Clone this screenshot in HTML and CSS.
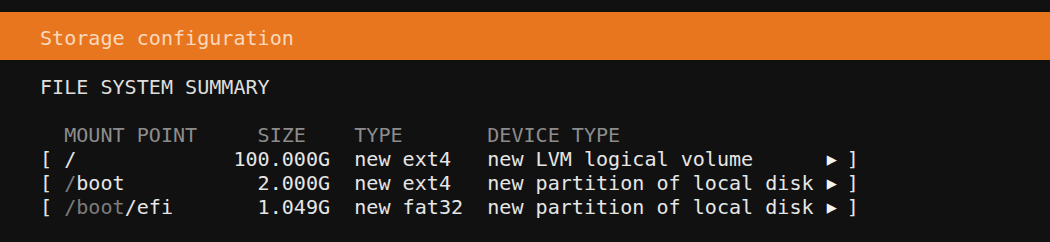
FILE: index.html
```html
<!DOCTYPE html>
<html lang="en">
<head>
<meta charset="utf-8">
<title>Storage configuration</title>
<link rel="stylesheet" href="styles.css">
</head>
<body>
<div class="screen">
  <header class="titlebar"><span class="title">Storage configuration</span></header>
  <main class="content">
    <div class="section">FILE SYSTEM SUMMARY</div>
    <div class="fs-table">
      <span class="cell"></span>
      <span class="cell head">MOUNT POINT</span>
      <span class="cell head size-head">SIZE</span>
      <span class="cell head type">TYPE</span>
      <span class="cell head">DEVICE TYPE</span>
      <span class="cell"></span>
      <span class="cell"></span>

      <span class="cell">[</span>
      <span class="cell">/</span>
      <span class="cell size">100.000G</span>
      <span class="cell type">new ext4</span>
      <span class="cell">new LVM logical volume</span>
      <span class="cell arrow">▶</span>
      <span class="cell close">]</span>

      <span class="cell">[</span>
      <span class="cell"><span class="dim">/</span>boot</span>
      <span class="cell size">2.000G</span>
      <span class="cell type">new ext4</span>
      <span class="cell">new partition of local disk</span>
      <span class="cell arrow">▶</span>
      <span class="cell close">]</span>

      <span class="cell">[</span>
      <span class="cell"><span class="dim">/boot</span>/efi</span>
      <span class="cell size">1.049G</span>
      <span class="cell type">new fat32</span>
      <span class="cell">new partition of local disk</span>
      <span class="cell arrow">▶</span>
      <span class="cell close">]</span>
    </div>
  </main>
</div>
</body>
</html>
```

FILE: styles.css
```css
html, body {
  margin: 0;
  padding: 0;
  background: #111111;
}

.screen {
  width: 1050px;
  height: 242px;
  padding-top: 12px;
  box-sizing: border-box;
  font-family: "DejaVu Sans Mono", "Liberation Mono", monospace;
  font-size: 20.08px;
  line-height: 24px;
  color: #e6e6e6;
}

.titlebar {
  background: #e8761f;
  height: 48px;
  box-sizing: border-box;
  padding: 14px 0 10px 40px;
  display: flex;
}

.title {
  color: #fad9bd;
}

.content {
  padding: 15px 0 0 40px;
}

.section {
  color: #dedede;
  margin-bottom: 24px;
}

.fs-table {
  display: grid;
  grid-template-columns: 2ch 14ch 8ch 13ch 28ch 2ch 1ch;
}

.cell {
  white-space: pre;
}

.head {
  color: #8c8c8c;
}

.size {
  text-align: right;
}

.size-head {
  padding-left: 2ch;
}

.type {
  padding-left: 2ch;
}

.dim {
  color: #7c7c7c;
}

.arrow {
  color: #f2f2f2;
  font-size: 17px;
  padding-left: 1px;
}

.close {
  color: #e6e6e6;
  margin-left: -3px;
}
```
